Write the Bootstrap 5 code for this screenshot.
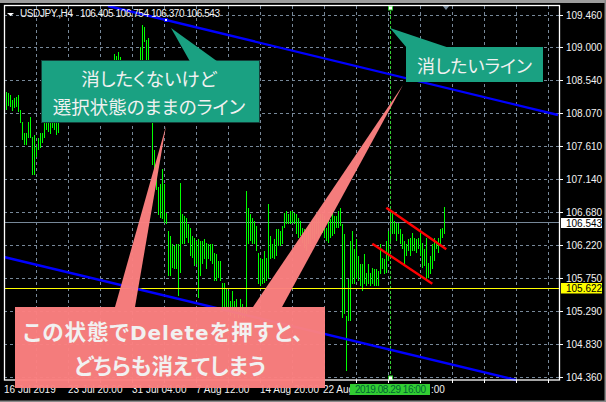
<!DOCTYPE html>
<html lang="ja">
<head>
<meta charset="utf-8">
<title>USDJPY H4</title>
<link rel="stylesheet" href="https://cdn.jsdelivr.net/npm/bootstrap@5.3.0/dist/css/bootstrap.min.css">
<style>
html,body{margin:0;background:#000;overflow:hidden}
.chart-shell{width:606px;height:402px;background:#000;overflow:hidden}
.chart-svg{display:block;position:absolute;inset:0}
.chart-svg text{font-family:"Liberation Sans",Arial,sans-serif;font-size:10px;fill:#f2f2f2}
.chart-svg .axis-num{font-size:10px}
.chart-svg .ink-dark{fill:#000}
.chart-svg .ink-date{fill:#063}
.callout{position:absolute;font-family:"Noto Sans CJK JP",sans-serif;font-feature-settings:"palt";text-align:center;color:#f1f1f1}
.callout-teal{background:#1aa182;border:1px solid #14403a;font-size:18.500px;line-height:28px}
.callout-pink{background:rgba(252,128,128,.97);font-size:21.500px;font-weight:700;line-height:31px}
.warn-first{letter-spacing:1px;padding-right:13px;white-space:nowrap}
.latin-word{font-family:"DejaVu Sans",sans-serif;font-size:20px}
.spot-keep{left:41px;top:60px;width:219px;height:63px;padding-right:3px}
.spot-erase{left:406px;top:47px;width:137px;height:35px;border-width:0;font-size:18px}
.spot-warn{left:15px;top:307px;width:310px;height:81px}
</style>
</head>
<body>
<div class="chart-shell position-relative">
<svg class="chart-svg" width="606" height="402" viewBox="0 0 606 402" xmlns="http://www.w3.org/2000/svg">
  <rect x="0" y="0" width="606" height="3" fill="#9c9c9c"/>
  <rect x="0" y="400.500" width="606" height="1.500" fill="#8a8a8a"/>
  <rect x="604.500" y="0" width="1.500" height="402" fill="#8a8a8a"/>
  <g id="grid" stroke="#778899" stroke-width="1" stroke-dasharray="3 3" fill="none"></g>
  <path d="M4 222.500H559" stroke="#778899" stroke-width="1"/>
  <path id="bars" stroke="#00ff00" stroke-width="1" fill="none" shape-rendering="crispEdges"/>
  <path d="M390.500 6V379" stroke="#32cd32" stroke-width="1" stroke-dasharray="3 2"/>
  <path d="M4 288.500H559" stroke="#ffff00" stroke-width="1"/>
  <path d="M108 6L558 115M4 257L516 380" stroke="#0000ff" stroke-width="2.400" fill="none"/>
  <path d="M386.300 207.700L446.300 249.300M372.300 243.700L432.300 283.700" stroke="#ff0000" stroke-width="2.400" fill="none"/>
  <rect x="164.500" y="18.500" width="3" height="3" fill="#fff" stroke="#0000ff"/>
  <rect x="388.500" y="6" width="4" height="4" fill="#fff" stroke="#32cd32"/>
  <rect x="388.500" y="376" width="4" height="4" fill="#fff" stroke="#32cd32"/>
  <path d="M442 5H450L446 10Z" fill="#778899"/>
  <rect x="4.500" y="5.500" width="555" height="374.500" fill="none" stroke="#fff" stroke-width="1.300"/>
  <g id="ticks" stroke="#fff" stroke-width="1"></g>
  <path d="M7 13H14L10.500 16Z" fill="#fff"/>
  <text x="20" y="17" textLength="53">USDJPY.,H4</text>
  <text x="80" y="17" textLength="140">106.405 106.754 106.370 106.543</text>
  <g id="axis"></g>
  <rect x="561" y="218" width="41" height="10" fill="#fff"/>
  <text class="axis-num ink-dark" x="566" y="226.500">106.543</text>
  <rect x="561" y="283" width="41" height="10.500" fill="#ffff00"/>
  <text class="axis-num ink-dark" x="566" y="292">105.622</text>
  <g id="dates"></g>
  <rect x="350" y="384" width="80" height="11" fill="#32cd32"/>
  <text class="ink-date" x="355" y="393" textLength="71">2019.08.29 16:00</text>
  <path d="M166 126L115 307H135Z" fill="#fc8080" fill-opacity=".97"/>
  <path d="M403 85L253 307H282Z" fill="#fc8080" fill-opacity=".97"/>
</svg>
<div class="callout callout-teal spot-keep d-flex flex-column justify-content-center">
  <div>消したくないけど</div>
  <div>選択状態のままのライン</div>
</div>
<div class="callout callout-teal spot-erase d-flex align-items-center justify-content-center">消したいライン</div>
<div class="callout callout-pink spot-warn d-flex flex-column justify-content-center">
  <div class="warn-first">この状態で<span class="latin-word">Delete</span>を押すと、</div>
  <div>どちらも消えてしまう</div>
</div>
<svg class="chart-svg" width="606" height="402" viewBox="0 0 606 402" xmlns="http://www.w3.org/2000/svg">
  <path d="M171 28L190 61.500H217.500Z" fill="#1aa182"/>
  <path d="M390 28L406.500 47.500H448Z" fill="#1aa182"/>
</svg>
</div>
<script>
(function(){
  var NS='http://www.w3.org/2000/svg', i;
  function put(id,tag,attrs,txt){var e=document.createElementNS(NS,tag);for(var k in attrs)e.setAttribute(k,attrs[k]);if(txt)e.textContent=txt;document.getElementById(id).appendChild(e);}
  for(i=36;i<=548;i+=32){put('grid','line',{x1:i+.5,y1:6,x2:i+.5,y2:380});put('ticks','line',{x1:i+.5,y1:380,x2:i+.5,y2:383});}
  var labels=['109.460','109.000','108.540','108.070','107.610','107.140','106.680','106.220','105.750','105.290','104.830','104.360'];
  var ys=[15.5,47.5,80.5,113.5,146.5,179.5,212.5,245.5,278.5,311.5,344.5,377.5];
  ys.forEach(function(y,n){
    put('grid','line',{x1:4,y1:y,x2:559,y2:y});
    put('ticks','line',{x1:560,y1:y,x2:563,y2:y});
    put('axis','text',{'class':'axis-num',x:566,y:y+3.5},labels[n]);
  });
  [['16 Jul 2019',4],['23 Jul 20:00',68],['31 Jul 04:00',132],['7 Aug 12:00',196],['14 Aug 20:00',260],['22 Aug',323],[':00',431]].forEach(function(t){
    put('dates','text',{x:t[1],y:393},t[0]);
  });
  var d='';
  function add(x,a,b){d+='M'+(x+.5)+' '+a+'V'+b;}
  var A=[[100,125],[92,110],[93,106],[95,107],[100,111],[98,108],[97,107],[95,112],[110,123],[122,140],[133,145],[133,145],[122,138],[117,138],[137,175],[135,175],[147,157],[138,150],[133,148],[133,143],[122,138],[122,130],[122,132],[122,134],[122,128],[122,130],[122,135],[122,133]];
  A.forEach(function(p,n){add(4+2*n,p[0],p[1]);});
  [[114,54,60],[116,56,60],[118,52,60],[120,57,60],[140,47,60],[142,25,60],[144,27,42],[146,40,60],[148,38,60],[152,122,165],[154,150,170],[156,165,190],[158,187,215]].forEach(function(p){add(p[0],p[1],p[2]);});
  var B=[[-50,50],[-96,55],[-50,65],[35,70],[90,225],[105,225],[130,200],[135,205],[130,205],[130,285],[-54,215],[40,130],[45,130],[50,110],[70,125],[80,165],[105,170],[110,195],[120,190],[115,290],[120,225],[120,190],[115,175],[125,205],[130,175],[130,180],[130,190],[155,240],[160,240],[180,230],[180,240],[245,320],[245,330],[260,330],[270,340],[300,345],[270,340],[300,350],[295,340],[320,350],[295,345],[310,350],[320,350],[-30,340],[20,130],[40,120],[50,130],[60,130],[75,150],[155,250],[170,255],[175,250],[150,245],[170,240],[10,230],[105,175],[130,170],[115,175],[85,165],[85,135],[90,135],[75,130],[35,80],[30,70],[40,70],[30,70],[30,65],[35,70],[40,100],[50,110],[60,105],[80,125],[85,140],[90,150],[80,130],[70,130],[60,115],[60,120],[45,100],[50,110],[40,100],[40,95],[55,110],
  [80,120],[50,125],[55,110],[40,105],[45,100],[45,80],[30,80],[20,75],[70,350],[100,340],[345,510],[235,360],[120,360],[90,250],[145,250],[115,230],[165,240],[190,255],[190,270],[160,250],[215,255],[190,250],[215,255],[200,250],[205,255],[205,255],[210,255],[130,220],[170,205],[175,220],[120,215],[90,180],[30,130],[30,100],[60,100],[65,120],[65,100],[85,130],[100,145],[120,195],[130,165],[115,150],[110,165],[95,150],[110,150],[115,155],[110,145],[95,165],[125,200],[145,195],[110,235],[185,230],[165,220],[130,205],[110,180],[120,145],[110,155],[85,130],[80,110],[18,100]];
  B.forEach(function(p,n){add(160+2*n,(201+p[0]/3).toFixed(1),(201+p[1]/3).toFixed(1));});
  document.getElementById('bars').setAttribute('d',d);
})();
</script>
<script src="https://cdn.jsdelivr.net/npm/bootstrap@5.3.0/dist/js/bootstrap.bundle.min.js"></script>
</body>
</html>
